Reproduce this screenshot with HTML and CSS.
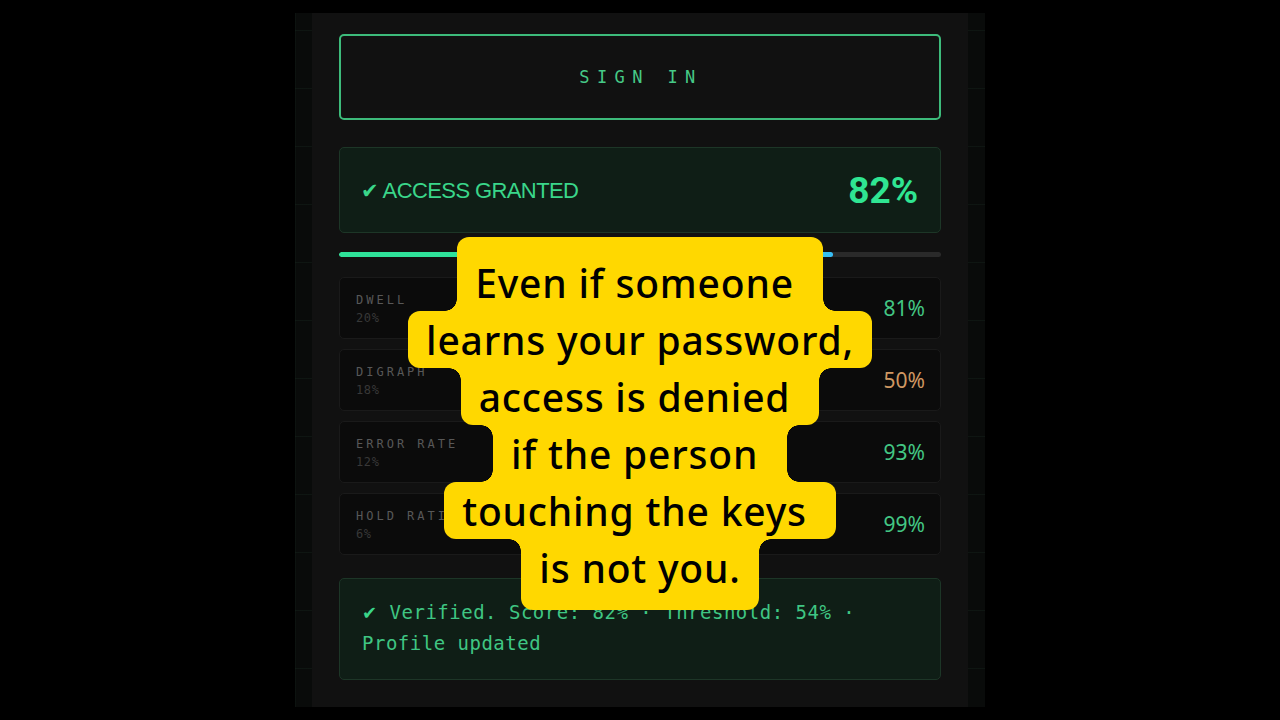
FILE: index.html
```html
<!DOCTYPE html>
<html>
<head>
<meta charset="utf-8">
<link rel="stylesheet" href="styles.css">
</head>
<body>
<div class="stage">
  <div class="frame">
    <div class="panel">
      <div class="signin">SIGN IN</div>
      <div class="granted">
        <span class="granted-label"><span class="check">✔</span> ACCESS GRANTED</span>
        <span class="granted-score">82%</span>
      </div>
      <div class="track"><div class="fill" style="width:82%"></div></div>
      <div class="rows">
        <div class="row">
          <div class="row-info"><div class="row-label">DWELL</div><div class="row-weight">20%</div></div>
          <div class="row-value good">81%</div>
        </div>
        <div class="row">
          <div class="row-info"><div class="row-label">DIGRAPH</div><div class="row-weight">18%</div></div>
          <div class="row-value warn">50%</div>
        </div>
        <div class="row">
          <div class="row-info"><div class="row-label">ERROR RATE</div><div class="row-weight">12%</div></div>
          <div class="row-value good">93%</div>
        </div>
        <div class="row">
          <div class="row-info"><div class="row-label">HOLD RATIO</div><div class="row-weight">6%</div></div>
          <div class="row-value good">99%</div>
        </div>
      </div>
      <div class="result"><span class="check-mono">✔</span>Verified. Score: 82% · Threshold: 54% · Profile updated</div>
    </div>
  </div>
  <div class="caption">
    <div class="line l1"><i class="f bl"></i><i class="f br"></i>Even if someone </div>
    <div class="line l2">learns your password,</div>
    <div class="line l3"><i class="f tl"></i><i class="f tr"></i>access is denied </div>
    <div class="line l4"><i class="f tl"></i><i class="f tr"></i><i class="f bl"></i><i class="f br"></i>if the person </div>
    <div class="line l5">touching the keys </div>
    <div class="line l6"><i class="f tl"></i><i class="f tr"></i>is not you.</div>
  </div>
</div>
</body>
</html>
```

FILE: styles.css
```css
html, body {
  margin: 0;
  padding: 0;
  background: #000;
}

.stage {
  position: relative;
  width: 1280px;
  height: 720px;
  overflow: hidden;
  background: #000;
  padding-top: 13px;
  box-sizing: border-box;
}

.frame {
  width: 690px;
  height: 694px;
  margin: 0 auto;
  background-color: #090b0a;
  background-image:
    linear-gradient(rgba(40, 70, 55, 0.18) 1px, transparent 1px),
    linear-gradient(90deg, rgba(40, 70, 55, 0.12) 1px, transparent 1px);
  background-size: 58px 58px;
  background-position: 0 17px;
  display: flex;
  justify-content: center;
}

.panel {
  width: 656px;
  height: 100%;
  box-sizing: border-box;
  background: #111111;
  padding: 21px 27px 0;
  display: flex;
  flex-direction: column;
}

.signin {
  height: 86px;
  box-sizing: border-box;
  border: 2px solid #3dbb7b;
  border-radius: 5px;
  display: flex;
  align-items: center;
  justify-content: center;
  font-family: "DejaVu Sans Mono", monospace;
  font-size: 17px;
  letter-spacing: 7.4px;
  padding-left: 2px;
  color: #46c987;
}

.granted {
  margin-top: 27px;
  height: 86px;
  box-sizing: border-box;
  background: #0f1e16;
  border: 1px solid #1d3627;
  border-radius: 5px;
  display: flex;
  align-items: center;
  justify-content: space-between;
  padding: 0 22px 0 21px;
}

.granted-label {
  font-family: "Liberation Sans", Arial, sans-serif;
  font-size: 22px;
  letter-spacing: -0.6px;
  color: #3ad68a;
  display: flex;
  align-items: center;
  gap: 4px;
  margin-top: 2px;
}

.check {
  font-family: "DejaVu Sans", sans-serif;
  font-size: 21px;
  letter-spacing: 0;
}

.granted-score {
  font-family: "Roboto", "Liberation Sans", sans-serif;
  font-size: 37px;
  font-weight: 700;
  color: #2fe592;
}

.track {
  margin-top: 19px;
  height: 5px;
  border-radius: 3px;
  background: #2a2a2a;
  overflow: hidden;
}

.fill {
  height: 100%;
  border-radius: 3px;
  background: linear-gradient(90deg, #2fe39a 0%, #2fe09c 88%, #38bdf8 100%);
}

.rows {
  margin-top: 20px;
  display: flex;
  flex-direction: column;
  gap: 10px;
}

.row {
  height: 62px;
  box-sizing: border-box;
  background: #0b0b0b;
  border: 1px solid #1a1a1a;
  border-radius: 5px;
  padding: 0 15px 0 16px;
  display: flex;
  align-items: center;
  justify-content: space-between;
}

.row-label {
  font-family: "DejaVu Sans Mono", monospace;
  font-size: 12px;
  line-height: 16px;
  letter-spacing: 3px;
  color: #585858;
}

.row-weight {
  margin-top: 3px;
  font-family: "DejaVu Sans Mono", monospace;
  font-size: 12px;
  line-height: 14px;
  letter-spacing: 0.6px;
  color: #383838;
}

.row-value {
  font-family: "Noto Sans", sans-serif;
  font-size: 21px;
}

.good { color: #43c683; }
.warn { color: #d09862; }

.result {
  margin-top: 23px;
  box-sizing: border-box;
  background: #0f1e16;
  border: 1px solid #1d3627;
  border-radius: 5px;
  padding: 18px 22px 20px;
  font-family: "DejaVu Sans Mono", monospace;
  font-size: 19px;
  letter-spacing: 0.5px;
  line-height: 31px;
  color: #3fc683;
}

.check-mono {
  display: inline-block;
  font-family: "DejaVu Sans", sans-serif;
  font-size: 18px;
  line-height: 20px;
  margin-right: 12px;
  color: #3ad68a;
}

/* caption overlay */
.caption {
  position: absolute;
  left: 0;
  top: 237px;
  width: 1280px;
  display: flex;
  flex-direction: column;
  align-items: center;
  font-family: "Noto Sans", sans-serif;
  font-size: 39px;
  font-weight: 500;
  letter-spacing: 0.8px;
  color: #000;
}

.line {
  position: relative;
  background: #ffd800;
  line-height: 57px;
  padding: 0 18px;
  white-space: pre;
}

.l1 { border-radius: 12px 12px 0 0; padding-top: 17px; }
.l2 { border-radius: 12px; }
.l3 { border-radius: 0 0 12px 12px; }
.l4 { border-radius: 0; }
.l5 { border-radius: 12px; }
.l6 { border-radius: 0 0 12px 12px; padding-bottom: 14px; }

.f {
  position: absolute;
  width: 12px;
  height: 12px;
}
.f.bl { left: -12px; bottom: 0; background: radial-gradient(circle at 0 0, transparent 11.5px, #ffd800 12px); }
.f.br { right: -12px; bottom: 0; background: radial-gradient(circle at 100% 0, transparent 11.5px, #ffd800 12px); }
.f.tl { left: -12px; top: 0; background: radial-gradient(circle at 0 100%, transparent 11.5px, #ffd800 12px); }
.f.tr { right: -12px; top: 0; background: radial-gradient(circle at 100% 100%, transparent 11.5px, #ffd800 12px); }
```
